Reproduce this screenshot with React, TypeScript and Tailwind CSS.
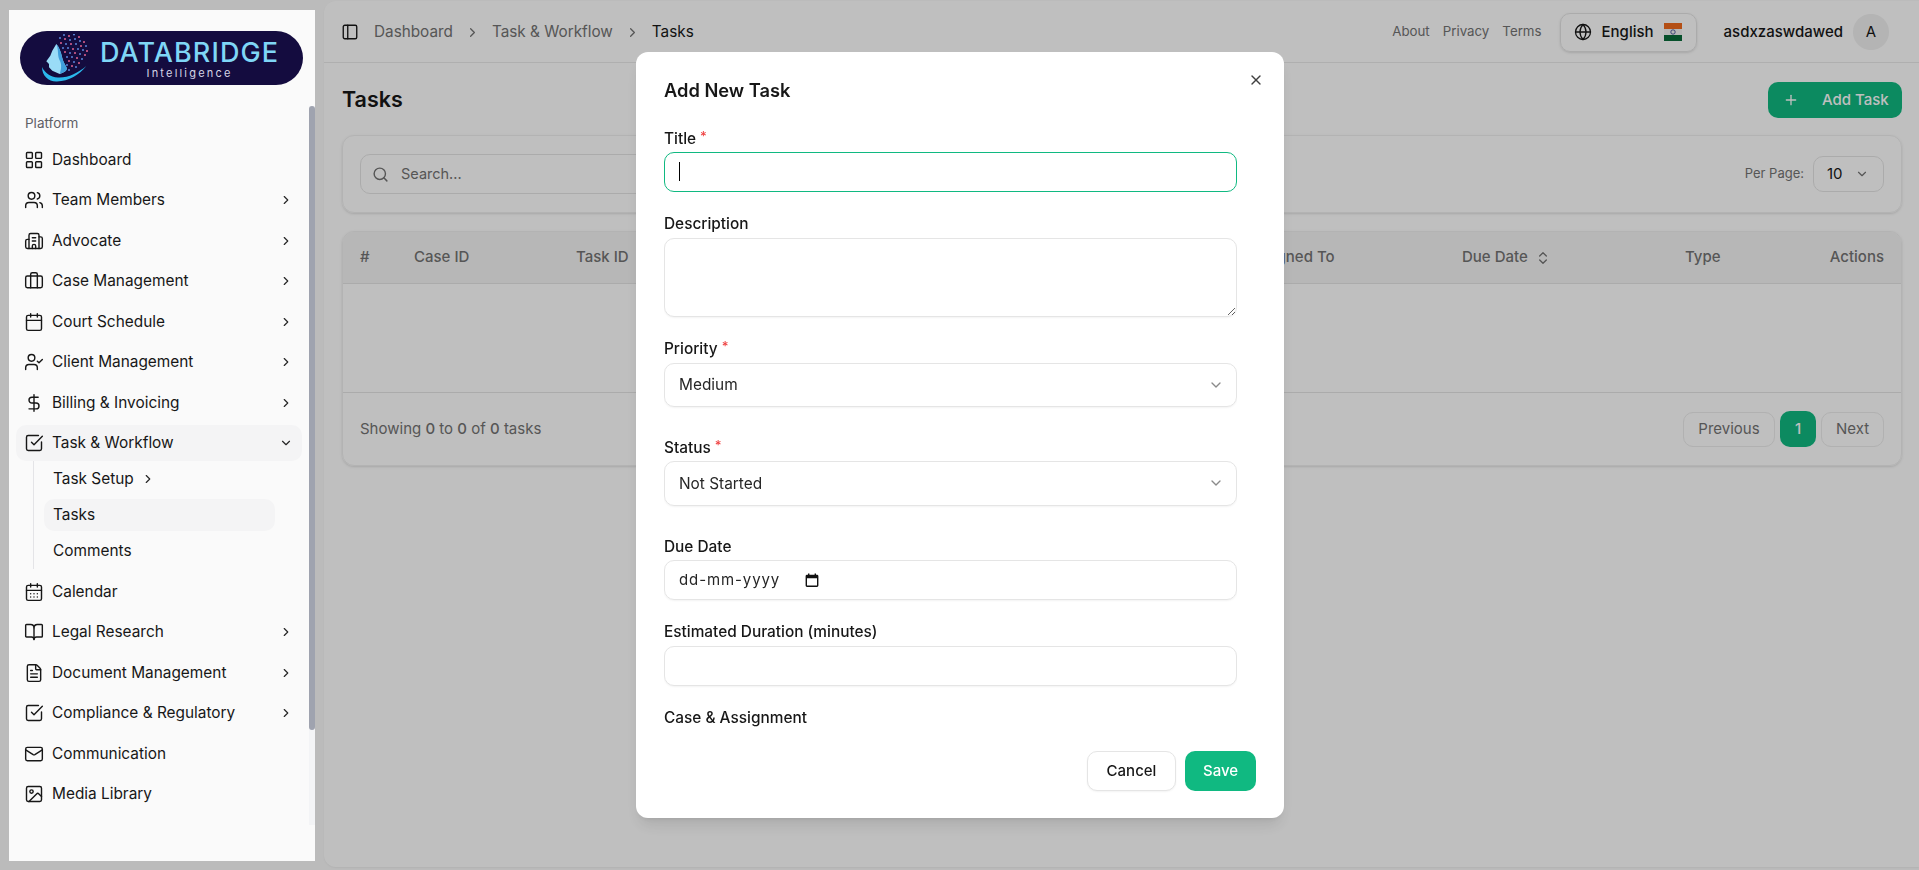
import {
  BookOpen,
  Briefcase,
  Building2,
  Calendar,
  CalendarDays,
  ChevronDown,
  ChevronRight,
  ChevronsUpDown,
  DollarSign,
  FileText,
  Globe,
  Image,
  LayoutGrid,
  Mail,
  PanelLeft,
  Plus,
  Search,
  SquareCheckBig,
  UserCheck,
  Users,
  X,
} from "lucide-react";
import type { ReactNode } from "react";

const font = "font-['Inter','Noto_Sans',sans-serif]";

const navTop = [
  { label: "Dashboard", icon: LayoutGrid },
  { label: "Team Members", icon: Users, more: true },
  { label: "Advocate", icon: Building2, more: true },
  { label: "Case Management", icon: Briefcase, more: true },
  { label: "Court Schedule", icon: Calendar, more: true },
  { label: "Client Management", icon: UserCheck, more: true },
  { label: "Billing & Invoicing", icon: DollarSign, more: true },
];

const navBottom = [
  { label: "Calendar", icon: CalendarDays },
  { label: "Legal Research", icon: BookOpen, more: true },
  { label: "Document Management", icon: FileText, more: true },
  { label: "Compliance & Regulatory", icon: SquareCheckBig, more: true },
  { label: "Communication", icon: Mail },
  { label: "Media Library", icon: Image },
];

const blue = "#5f8fe6";
const pink = "#ef6a96";
const dots = [
  [22, 1, blue], [27, 2, pink], [32, 0.5, blue], [37, 3, pink], [18, 4, blue], [23, 5, pink], [28, 6, blue], [33, 5, blue], [38, 7, blue], [42, 8, pink],
  [19, 9, pink], [24, 10, blue], [29, 10, pink], [34, 10, blue], [39, 12, pink], [44, 12, blue], [21, 14, blue], [26, 14, blue], [31, 15, pink], [36, 15, blue],
  [41, 16, blue], [45, 17, pink], [23, 18, pink], [28, 19, blue], [33, 19, pink], [38, 20, blue], [43, 21, pink], [25, 23, blue], [30, 23, blue], [35, 24, pink],
  [40, 25, blue], [27, 27, pink], [32, 28, blue], [37, 29, pink], [25, 31, blue], [30, 32, pink], [34, 33, blue], [27, 36, blue],
] as const;

function Logo() {
  return (
    <div className="ml-[11px] flex h-[54px] w-[283px] items-center rounded-full bg-[#140c3f]">
      <svg viewBox="0 0 46 48" className="ml-[22px] h-[48px] w-[46px] shrink-0">
        {dots.map(([x, y, c], i) => (
          <circle key={i} cx={x} cy={y} r="0.95" fill={c} />
        ))}
        <path d="M14.3 10L10.3 16.7L8.3 21.7L4.3 27.3L7 30L7 33.3L10.3 36.7L17.7 40C23 38 26 36 24.3 33C22 29 21 27 20 23C19 18 17 13 14.3 10Z" fill="#9adcf7" />
        <path d="M14.3 10C17 16 15 22 18 27C20 31 19 36 17.7 40C23 38 26 36 24.3 33C22 29 21 27 20 23C19 18 17 13 14.3 10Z" fill="#3f9fdc" />
        <path d="M0 33C0 42 7 48 15 47.5C27 47 37 41 44.3 32C36 39 26 44 16 43.5C8 43 3 39 0 33Z" fill="#2bb8ec" />
      </svg>
      <div className="ml-[12px] flex flex-col items-center leading-none">
        <span className="mt-[3px] text-[27px] leading-[26px] font-medium tracking-[0.04em] text-[#7fd6f6]">DATABRIDGE</span>
        <span className="mt-[2px] text-[11px] leading-[11px] tracking-[0.2em] text-[#d5d5e6]">Intelligence</span>
      </div>
    </div>
  );
}

function NavItem({ item, active }: { item: (typeof navTop)[number]; active?: boolean }) {
  const Icon = item.icon;
  return (
    <div className={`flex h-[36px] items-center gap-[8px] rounded-[10px] pr-[9px] pl-[8px] ${active ? "bg-[#f4f4f5]" : ""}`}>
      <Icon size={20} strokeWidth={1.7} className="shrink-0 text-[#171717]" />
      <span className="flex-1 text-[15.4px] text-[#171717]">{item.label}</span>
      {item.more && <ChevronRight size={14} className="text-[#262626]" />}
      {active && <ChevronDown size={14} className="text-[#262626]" />}
    </div>
  );
}

function Sidebar() {
  return (
    <aside className="relative z-[60] my-[10px] ml-[9px] flex h-[851px] w-[306px] shrink-0 flex-col bg-[#fafafa] pt-[21px]">
      <Logo />
      <div className="mt-[28px] ml-[7px] w-[286px]">
        <div className="ml-[9px] text-[13.5px] leading-[20px] text-[#5f5f66]">Platform</div>
        <nav className="mt-[8.5px] flex flex-col gap-[4.5px]">
          {navTop.map((item) => (
            <NavItem key={item.label} item={item} />
          ))}
          <NavItem active item={{ label: "Task & Workflow", icon: SquareCheckBig }} />
          <div className="-mt-[4.5px] ml-[17px] flex w-[242px] flex-col gap-[4px] border-l border-[#e4e4e7] py-[2px] pl-[10px]">
            <div className="flex h-[32px] items-center gap-[7px] px-[9px] text-[15.4px] text-[#171717]">
              Task Setup <ChevronRight size={14} className="text-[#262626]" />
            </div>
            <div className="flex h-[32px] items-center rounded-[10px] bg-[#f4f4f5] px-[9px] text-[15.4px] text-[#171717]">Tasks</div>
            <div className="flex h-[32px] items-center px-[9px] text-[15.4px] text-[#171717]">Comments</div>
          </div>
          {navBottom.map((item) => (
            <NavItem key={item.label} item={item} />
          ))}
        </nav>
      </div>
      {/* sidebar scrollbar */}
      <div className="absolute top-[96px] right-0 h-[719px] w-[6px] bg-[#f3f4f6]">
        <div className="h-[624px] w-full rounded-full bg-[#9fa3af]" />
      </div>
    </aside>
  );
}

function Header() {
  return (
    <header className="flex h-[62px] shrink-0 items-center border-b border-[#eaeaea] pt-px pr-[30px] pl-[17px]">
      <PanelLeft size={18} strokeWidth={1.8} className="text-[#171717]" />
      <div className="ml-[15px] flex items-center text-[15.3px] text-[#737373]">
        <span>Dashboard</span>
        <ChevronRight size={15} className="mx-[12px]" />
        <span>Task & Workflow</span>
        <ChevronRight size={15} className="mx-[12px]" />
        <span className="text-[#171717]">Tasks</span>
      </div>
      <div className="ml-auto flex items-center gap-[13px] text-[13.3px] text-[#737373]">
        <span>About</span>
        <span>Privacy</span>
        <span>Terms</span>
      </div>
      <div className="ml-[18px] flex h-[39px] w-[137px] items-center rounded-[10px] border border-[#e5e5e5] pl-[13px] shadow-sm">
        <Globe size={18} strokeWidth={1.7} className="text-[#171717]" />
        <span className="ml-[10px] text-[15px] font-medium text-[#171717]">English</span>
        <svg viewBox="0 0 18 18" className="ml-[10px] h-[18px] w-[18px]">
          <rect width="18" height="6" fill="#f06a1c" />
          <rect y="6" width="18" height="6" fill="#f5f5f5" />
          <rect y="12" width="18" height="6" fill="#0a6b3a" />
          <circle cx="9" cy="9" r="2.2" fill="none" stroke="#2a3a8c" strokeWidth="0.8" />
        </svg>
      </div>
      <span className="ml-[27px] text-[15px] font-medium text-[#171717]">asdxzaswdawed</span>
      <div className="ml-[10px] flex h-[36px] w-[36px] items-center justify-center rounded-full bg-[#f0f0f0] text-[15px] text-[#171717]">A</div>
    </header>
  );
}

function TasksPage() {
  return (
    <div className="flex-1 pr-[17px] pl-[18px]">
      <div className="mt-[19px] flex h-[36px] items-start justify-between">
        <h1 className="text-[21.5px] leading-[34px] font-semibold text-[#171717]">Tasks</h1>
        <div className="flex h-[36px] w-[134px] items-center rounded-[10px] bg-[#10b981] pl-[15px] text-[15px] font-medium text-white">
          <Plus size={16} />
          <span className="ml-[23px]">Add Task</span>
        </div>
      </div>

      <div className="mt-[17px] flex h-[78px] items-center justify-between rounded-xl border border-[#efefef] px-[17px] shadow-sm">
        <div className="flex h-[40px] w-[500px] items-center rounded-[10px] border border-[#e5e5e5] pl-[11px] text-[14.5px] text-[#737373]">
          <Search size={17} />
          <span className="ml-[12px]">Search...</span>
        </div>
        <div className="flex items-center gap-[9px]">
          <span className="text-[13px] text-[#737373]">Per Page:</span>
          <div className="flex h-[36px] w-[71px] items-center justify-between rounded-[10px] border border-[#e5e5e5] pr-[14px] pl-[13px] text-[15px] text-[#171717]">
            10 <ChevronDown size={14} className="text-[#737373]" />
          </div>
        </div>
      </div>

      <div className="mt-[18px] h-[235px] overflow-hidden rounded-xl border border-[#efefef] shadow-sm">
        <div className="grid h-[52px] grid-cols-[54px_162px_670px_216px_223px_1fr] items-center border-b border-[#e5e5e5] bg-[#f5f5f5] px-[17px] text-[15px] font-medium text-[#737373]">
          <span>#</span>
          <span>Case ID</span>
          <span>Task ID</span>
          <span>Assigned To</span>
          <span className="flex items-center gap-[7px]">
            Due Date <ChevronsUpDown size={16} />
          </span>
          <span className="flex justify-between">
            Type <span>Actions</span>
          </span>
        </div>
        <div className="h-[109px] border-b border-[#e5e5e5]" />
        <div className="flex h-[72px] items-center justify-between px-[17px]">
          <span className="text-[15px] text-[#737373]">
            Showing <span className="font-medium">0</span> to <span className="font-medium">0</span> of <span className="font-medium">0</span> tasks
          </span>
          <div className="flex items-center gap-[5px] text-[15px] text-[#737373]">
            <div className="flex h-[35px] w-[92px] items-center justify-center rounded-[10px] border border-[#ececec]">Previous</div>
            <div className="flex h-[36px] w-[36px] items-center justify-center rounded-[10px] bg-[#10b981] font-medium text-white">1</div>
            <div className="flex h-[35px] w-[63px] items-center justify-center rounded-[10px] border border-[#ececec]">Next</div>
          </div>
        </div>
      </div>
    </div>
  );
}

function Field({ label, required, children, className = "" }: { label: string; required?: boolean; children: ReactNode; className?: string }) {
  return (
    <div className={className}>
      <div className="mb-[3.5px] h-[20px] text-[15.4px] leading-[20px] font-medium text-[#171717]">
        {label}
        {required && <span className="ml-[4px] align-[3px] text-[13px] leading-[0] text-[#ef4444]">*</span>}
      </div>
      {children}
    </div>
  );
}

function SelectBox({ value }: { value: string }) {
  return (
    <div className="flex h-[44.5px] items-center justify-between rounded-[10px] border border-[#e5e5e5] pr-[12px] pl-[14px] text-[15.4px] text-[#262626] shadow-xs">
      {value}
      <ChevronDown size={16} className="text-[#8a8a8a]" />
    </div>
  );
}

const inputCls = "block h-[40px] w-full rounded-[10px] bg-white px-[14px] text-[15px] outline-none";

function AddTaskModal() {
  return (
    <div className="fixed inset-0 z-50 flex items-center justify-center bg-black/25">
      <div className="relative ml-px flex h-[766px] w-[648px] flex-col rounded-xl bg-white pt-[27px] pr-[28px] pl-[28px] shadow-lg">
        <X size={16} className="absolute top-[20px] right-[20px] text-[#404040]" />
        <h2 className="text-[18.3px] leading-[22px] font-semibold text-[#171717]">Add New Task</h2>
        <div className="mt-[27.5px] flex w-[573px] flex-1 flex-col gap-[22px] overflow-hidden">
          <Field label="Title" required>
            <div className="relative">
              <input className={`${inputCls} border-[1.5px] border-[#10b981] caret-transparent`} />
              <span className="absolute top-[10px] left-[15px] h-[19px] w-px bg-black" />
            </div>
          </Field>
          <Field label="Description">
            <textarea className="block h-[79.5px] w-full rounded-[10px] border border-[#e5e5e5] bg-white px-[14px] py-2 text-[15px] shadow-xs outline-none" />
          </Field>
          <Field label="Priority" required className="pb-[8.5px]">
            <SelectBox value="Medium" />
          </Field>
          <Field label="Status" required className="pb-[9px]">
            <SelectBox value="Not Started" />
          </Field>
          <Field label="Due Date">
            <div className="flex h-[40px] items-center rounded-[10px] border border-[#e5e5e5] px-[14px] text-[15px] text-[#262626] shadow-xs">
              <span className="tracking-[0.06em]">dd-mm-yyyy</span>
              <svg viewBox="0 0 14 14" className="ml-[25px] h-[14px] w-[14px]">
                <path d="M3 0.5h1.4v1.3h5.2V0.5H11v1.3h1A1.4 1.4 0 0 1 13.4 3.2v9.3a1.4 1.4 0 0 1-1.4 1.4H2A1.4 1.4 0 0 1 .6 12.5V3.2A1.4 1.4 0 0 1 2 1.8h1zM2 5.2v7.3h10V5.2z" fill="#111" />
              </svg>
            </div>
          </Field>
          <Field label="Estimated Duration (minutes)">
            <input className={`${inputCls} border border-[#e5e5e5] shadow-xs`} />
          </Field>
          <div className="h-[20px] text-[15.4px] leading-[20px] font-medium text-[#171717]">Case &amp; Assignment</div>
        </div>
        <div className="absolute right-[28px] bottom-[27px] flex gap-[9px]">
          <div className="flex h-[40px] w-[89px] items-center justify-center rounded-[10px] border border-[#e5e5e5] bg-white text-[15px] font-medium text-[#171717] shadow-xs">Cancel</div>
          <div className="flex h-[40px] w-[71px] items-center justify-center rounded-[10px] bg-[#10b981] text-[15px] font-medium text-white">Save</div>
        </div>
      </div>
    </div>
  );
}

export default function App() {
  return (
    <div className={`${font} flex h-[870px] w-[1919px] overflow-hidden bg-[#fafafa] antialiased`}>
      <Sidebar />
      <main className="mt-px mb-[3px] ml-[9px] flex flex-1 flex-col rounded-l-xl bg-white shadow-xs">
        <Header />
        <TasksPage />
      </main>
      <AddTaskModal />
    </div>
  );
}
